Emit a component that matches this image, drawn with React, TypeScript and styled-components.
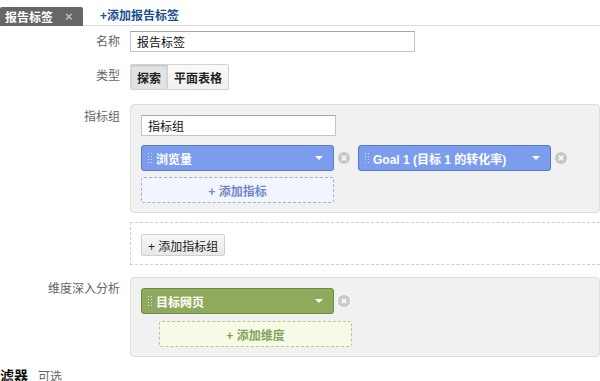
import styled, { createGlobalStyle } from 'styled-components';

const GlobalStyle = createGlobalStyle`
	body {
		margin: 0;
		overflow: hidden;
		background: #fff;
		font-family: 'Liberation Sans', 'Noto Sans CJK SC', sans-serif;
		font-size: 12px;
		color: #222;
	}
`;

type Tone = 'blue' | 'green';

const tones = {
	blue: { bg: '#7c9cee', border: '#5a78cc', dashBg: '#f2f5fd', dashBorder: '#9fb0d8', dashText: '#6f89c9' },
	green: { bg: '#8faa5c', border: '#6e8a3e', dashBg: '#f5fbe4', dashBorder: '#b9c78c', dashText: '#87a05a' },
};

const Handle = () => (
	<svg width="5" height="12" viewBox="0 0 5 12">
		{[0, 3, 6, 9].map((y) => (
			<g key={y} fill="#e9eefc" opacity="0.85">
				<rect x="0" y={y + 1} width="1" height="1" />
				<rect x="3" y={y + 1} width="1" height="1" />
			</g>
		))}
	</svg>
);

const Remove = () => (
	<RemoveIcon viewBox="0 0 12 12">
		<circle cx="6" cy="6" r="6" fill="#c8c8c8" />
		<path d="M3.8 3.8 L8.2 8.2 M8.2 3.8 L3.8 8.2" stroke="#fff" strokeWidth="1.6" />
	</RemoveIcon>
);

const Chip = ({ tone, label }: { tone: Tone; label: string }) => (
	<ChipBox $tone={tone}>
		<Handle />
		<ChipText>{label}</ChipText>
		<Caret />
	</ChipBox>
);

const App = () => {
	return (
		<>
			<GlobalStyle />
			<Page>
				<TabBar>
					<Tab>
						报告标签<TabClose>×</TabClose>
					</Tab>
					<AddTab>+添加报告标签</AddTab>
				</TabBar>

				<Row $gap={5}>
					<Label $top={4}>名称</Label>
					<TextInput defaultValue="报告标签" $width={285} />
				</Row>

				<Row $gap={12}>
					<Label $top={5}>类型</Label>
					<Segment>
						<SegButton $active>探索</SegButton>
						<SegButton>平面表格</SegButton>
					</Segment>
				</Row>

				<Row $gap={14}>
					<Label $top={6}>指标组</Label>
					<Panel>
						<TextInput defaultValue="指标组" $width={195} />
						<ChipRow>
							<ChipColumn>
								<Chip tone="blue" label="浏览量" />
								<AddSlot $tone="blue">+ 添加指标</AddSlot>
							</ChipColumn>
							<Remove />
							<ChipColumn $spaced>
								<Chip tone="blue" label="Goal 1 (目标 1 的转化率)" />
							</ChipColumn>
							<Remove />
						</ChipRow>
					</Panel>
				</Row>

				<Row $gap={9}>
					<Label />
					<DashedPanel>
						<GrayButton>+ 添加指标组</GrayButton>
					</DashedPanel>
				</Row>

				<Row $gap={12}>
					<Label $top={5}>维度深入分析</Label>
					<Panel>
						<ChipRow $first>
							<ChipColumn>
								<Chip tone="green" label="目标网页" />
							</ChipColumn>
							<Remove />
						</ChipRow>
						<AddSlot $tone="green" $indent>
							+ 添加维度
						</AddSlot>
					</Panel>
				</Row>

				<Filter>
					<FilterTitle>过滤器</FilterTitle>
					<FilterNote>可选</FilterNote>
				</Filter>
			</Page>
		</>
	);
};

const Page = styled.div`
	width: 600px;
	height: 381px;
	overflow: hidden;
`;

const TabBar = styled.div`
	display: flex;
	align-items: flex-end;
	height: 26px;
`;

const Tab = styled.div`
	display: flex;
	align-items: center;
	width: 83px;
	height: 19px;
	box-sizing: border-box;
	padding-left: 5px;
	background: #666;
	color: #fff;
	font-weight: bold;
	font-size: 12px;
	border-radius: 2px 2px 0 0;
`;

const TabClose = styled.span`
	margin-left: 12px;
	color: #bbb;
	font-size: 13px;
`;

const AddTab = styled.div`
	flex: 1;
	height: 26px;
	box-sizing: border-box;
	padding: 9px 0 0 17px;
	border-bottom: 1px solid #ddd;
	color: #1c4f8f;
	font-weight: bold;
	font-size: 12px;
	line-height: 14px;
`;

const Row = styled.div<{ $gap: number }>`
	display: flex;
	align-items: flex-start;
	margin-top: ${(p) => p.$gap}px;
`;

const Label = styled.div<{ $top?: number }>`
	flex: 0 0 130px;
	box-sizing: border-box;
	padding: ${(p) => p.$top ?? 0}px 10px 0 0;
	text-align: right;
	color: #666;
	font-size: 12px;
	line-height: 14px;
`;

const TextInput = styled.input<{ $width: number }>`
	width: ${(p) => p.$width}px;
	height: 21px;
	box-sizing: border-box;
	padding: 0 6px;
	border: 1px solid #c4c4c4;
	border-top-color: #a8a8a8;
	font-family: inherit;
	font-size: 12px;
	color: #111;
	background: #fff;
	outline: none;
`;

const Segment = styled.div`
	display: flex;
`;

const SegButton = styled.div<{ $active?: boolean }>`
	height: 26px;
	box-sizing: border-box;
	padding: 0 6px;
	display: flex;
	align-items: center;
	border: 1px solid #d2d2d2;
	margin-left: -1px;
	font-weight: bold;
	font-size: 12px;
	color: #222;
	background: ${(p) => (p.$active ? '#e3e3e3' : 'linear-gradient(#fafafa, #f0f0f0)')};
	box-shadow: ${(p) => (p.$active ? 'inset 0 1px 2px rgba(0,0,0,0.15)' : 'none')};
	&:first-child {
		margin-left: 0;
		border-radius: 2px 0 0 2px;
	}
	&:last-child {
		border-radius: 0 2px 2px 0;
	}
`;

const Panel = styled.div`
	width: 480px;
	box-sizing: border-box;
	padding: 10px 10px 9px 10px;
	background: #f1f1f1;
	border: 1px solid #ddd;
	border-radius: 4px;
`;

const DashedPanel = styled.div`
	width: 480px;
	height: 43px;
	box-sizing: border-box;
	padding: 11px 10px;
	border: 1px dashed #cfcfcf;
	border-right: none;
`;

const GrayButton = styled.div`
	display: inline-flex;
	align-items: center;
	height: 22px;
	box-sizing: border-box;
	padding: 0 6px;
	border: 1px solid #d0d0d0;
	border-radius: 2px;
	background: linear-gradient(#f8f8f8, #e8e8e8);
	font-size: 12px;
	color: #222;
`;

const ChipRow = styled.div<{ $first?: boolean }>`
	display: flex;
	align-items: flex-start;
	gap: 4px;
	margin-top: ${(p) => (p.$first ? 0 : 9)}px;
`;

const ChipColumn = styled.div<{ $spaced?: boolean }>`
	display: flex;
	flex-direction: column;
	gap: 6px;
	margin-left: ${(p) => (p.$spaced ? 4 : 0)}px;
`;

const ChipBox = styled.div<{ $tone: Tone }>`
	width: 193px;
	height: 26px;
	box-sizing: border-box;
	display: flex;
	align-items: center;
	gap: 3px;
	padding: 0 10px 0 6px;
	border: 1px solid ${(p) => tones[p.$tone].border};
	border-radius: 3px;
	background: ${(p) => tones[p.$tone].bg};
	color: #fff;
`;

const ChipText = styled.span`
	flex: 1;
	font-weight: bold;
	font-size: 12px;
	white-space: nowrap;
`;

const Caret = styled.span`
	width: 0;
	height: 0;
	border-left: 4px solid transparent;
	border-right: 4px solid transparent;
	border-top: 4px solid #fff;
`;

const RemoveIcon = styled.svg`
	flex: none;
	width: 12px;
	height: 12px;
	margin-top: 7px;
`;

const AddSlot = styled.div<{ $tone: Tone; $indent?: boolean }>`
	width: 193px;
	height: 26px;
	box-sizing: border-box;
	margin: ${(p) => (p.$indent ? '7px 0 0 18px' : '0')};
	display: flex;
	align-items: center;
	justify-content: center;
	border: 1px dashed ${(p) => tones[p.$tone].dashBorder};
	border-radius: 3px;
	background: ${(p) => tones[p.$tone].dashBg};
	color: ${(p) => tones[p.$tone].dashText};
	font-weight: bold;
	font-size: 12px;
`;

const Filter = styled.div`
	display: flex;
	align-items: baseline;
	gap: 10px;
	margin: 8px 0 0 -14px;
`;

const FilterTitle = styled.span`
	font-weight: bold;
	font-size: 14px;
	color: #111;
`;

const FilterNote = styled.span`
	font-size: 12px;
	color: #666;
`;

export default App;
